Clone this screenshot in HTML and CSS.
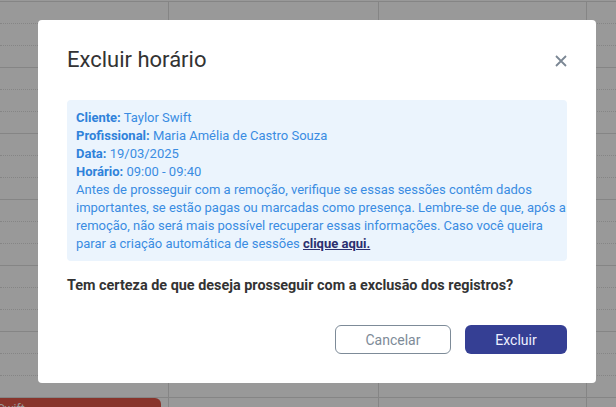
FILE: index.html
```html
<!DOCTYPE html>
<html>

<head>
	<link rel="stylesheet" href="styles.css">
</head>

<body>
	<div class="calendar">
		<div class="day-col col-1">
			<div class="hour"><div class="slot"></div><div class="slot"></div><div class="slot"></div></div>
			<div class="hour"><div class="slot"></div><div class="slot"></div><div class="slot"></div></div>
			<div class="hour"><div class="slot"></div><div class="slot"></div><div class="slot"></div></div>
			<div class="hour"><div class="slot"></div><div class="slot"></div><div class="slot"></div></div>
			<div class="hour"><div class="slot"></div><div class="slot"></div><div class="slot"></div></div>
			<div class="hour"><div class="slot"></div><div class="slot"></div><div class="slot"></div></div>
			<div class="hour">
				<div class="slot">
					<div class="event"><span class="event-title">Taylor Swift</span></div>
				</div>
			</div>
		</div>
		<div class="day-col col-2">
			<div class="hour"><div class="slot"></div><div class="slot"></div><div class="slot"></div></div>
			<div class="hour"><div class="slot"></div><div class="slot"></div><div class="slot"></div></div>
			<div class="hour"><div class="slot"></div><div class="slot"></div><div class="slot"></div></div>
			<div class="hour"><div class="slot"></div><div class="slot"></div><div class="slot"></div></div>
			<div class="hour"><div class="slot"></div><div class="slot"></div><div class="slot"></div></div>
			<div class="hour"><div class="slot"></div><div class="slot"></div><div class="slot"></div></div>
			<div class="hour"><div class="slot"></div></div>
		</div>
		<div class="day-col col-3">
			<div class="hour"><div class="slot"></div><div class="slot"></div><div class="slot"></div></div>
			<div class="hour"><div class="slot"></div><div class="slot"></div><div class="slot"></div></div>
			<div class="hour"><div class="slot"></div><div class="slot"></div><div class="slot"></div></div>
			<div class="hour"><div class="slot"></div><div class="slot"></div><div class="slot"></div></div>
			<div class="hour"><div class="slot"></div><div class="slot"></div><div class="slot"></div></div>
			<div class="hour"><div class="slot"></div><div class="slot"></div><div class="slot"></div></div>
			<div class="hour"><div class="slot"></div></div>
		</div>
		<div class="day-col col-4">
			<div class="hour"><div class="slot"></div><div class="slot"></div><div class="slot"></div></div>
			<div class="hour"><div class="slot"></div><div class="slot"></div><div class="slot"></div></div>
			<div class="hour"><div class="slot"></div><div class="slot"></div><div class="slot"></div></div>
			<div class="hour"><div class="slot"></div><div class="slot"></div><div class="slot"></div></div>
			<div class="hour"><div class="slot"></div><div class="slot"></div><div class="slot"></div></div>
			<div class="hour"><div class="slot"></div><div class="slot"></div><div class="slot"></div></div>
			<div class="hour"><div class="slot"></div></div>
		</div>
	</div>

	<!-- Delete confirmation modal -->
	<div class="modal-overlay">
		<div class="modal">
			<div class="modal-header">
				<h2>Excluir horário</h2>
				<button class="close-btn" aria-label="Fechar">
					<svg width="12" height="12" viewBox="0 0 12 12">
						<path d="M1 1 L11 11 M11 1 L1 11" stroke="#7b8794" stroke-width="1.8" fill="none" />
					</svg>
				</button>
			</div>

			<div class="info-box">
				<div><b>Cliente:</b> Taylor Swift</div>
				<div><b>Profissional:</b> Maria Amélia de Castro Souza</div>
				<div><b>Data:</b> 19/03/2025</div>
				<div><b>Horário:</b> 09:00 - 09:40</div>
				<p>Antes de prosseguir com a remoção, verifique se essas sessões contêm dados importantes, se estão pagas ou marcadas como presença. Lembre-se de que, após a remoção, não será mais possível recuperar essas informações. Caso você queira parar a criação automática de sessões <a href="#">clique aqui.</a></p>
			</div>

			<p class="question">Tem certeza de que deseja prosseguir com a exclusão dos registros?</p>

			<div class="modal-footer">
				<button class="btn btn-outline">Cancelar</button>
				<button class="btn btn-primary">Excluir</button>
			</div>
		</div>
	</div>
</body>

</html>
```

FILE: styles.css
```css
* {
	box-sizing: border-box;
	margin: 0;
	padding: 0;
	font-family: Roboto, 'Liberation Sans', sans-serif;
}

body {
	width: 616px;
	height: 407px;
	overflow: hidden;
	background: white;
}

/* Calendar behind the modal */
.calendar {
	display: flex;
	padding-top: 1px;
}

.day-col {
	border-right: 1px solid #dedede;
}

.col-1 {
	width: 169px;
}

.col-2 {
	width: 210px;
}

.col-3 {
	width: 208px;
}

.col-4 {
	flex: 1;
	border-right: none;
}

.hour {
	border-top: 1px solid #dedede;
}

.slot {
	height: 22px;
	border-top: 1px dotted #dedede;
}

.slot:first-child {
	height: 21px;
	border-top: none;
}

.event {
	height: 21px;
	margin-right: 7px;
	background: #e35849;
	border-radius: 0 6px 0 0;
	overflow: hidden;
	white-space: nowrap;
}

.event-title {
	display: inline-block;
	margin-left: -38px;
	color: white;
	font-size: 12px;
	line-height: 14px;
	padding-top: 3px;
}

/* Modal */
.modal-overlay {
	position: fixed;
	top: 0;
	left: 0;
	width: 100%;
	height: 100%;
	background: rgba(0, 0, 0, 0.4);
	padding: 20px 0 0 38px;
}

.modal {
	width: 558px;
	height: 363px;
	background: white;
	border-radius: 4px;
	padding: 27px 29px 0;
}

.modal-header {
	display: flex;
	justify-content: space-between;
	align-items: center;
	margin-bottom: 27px;
}

.modal-header h2 {
	font-size: 22px;
	line-height: 26px;
	font-weight: 400;
	color: #333;
}

.close-btn {
	background: none;
	border: none;
	width: 12px;
	height: 12px;
	display: flex;
	margin-top: 1px;
	cursor: pointer;
}

.info-box {
	background: #ebf4fd;
	border-radius: 4px;
	padding: 9px 0 8px 9px;
	color: #3a8ce2;
	font-size: 13px;
	line-height: 18px;
}

.info-box b {
	font-weight: 700;
	color: #2f82da;
}

.info-box a {
	color: #2b2f6f;
	font-weight: 700;
}

.question {
	margin-top: 15px;
	font-size: 14.4px;
	line-height: 20px;
	font-weight: 700;
	color: #333;
}

.modal-footer {
	display: flex;
	justify-content: flex-end;
	gap: 14px;
	margin-top: 29px;
}

.btn {
	height: 29px;
	border-radius: 6px;
	font-size: 14px;
	cursor: pointer;
}

.btn-outline {
	width: 116px;
	background: white;
	border: 1px solid #7d8b98;
	color: #7d8b98;
}

.btn-primary {
	width: 102px;
	background: #353f94;
	border: none;
	color: #eef0ff;
}
```
